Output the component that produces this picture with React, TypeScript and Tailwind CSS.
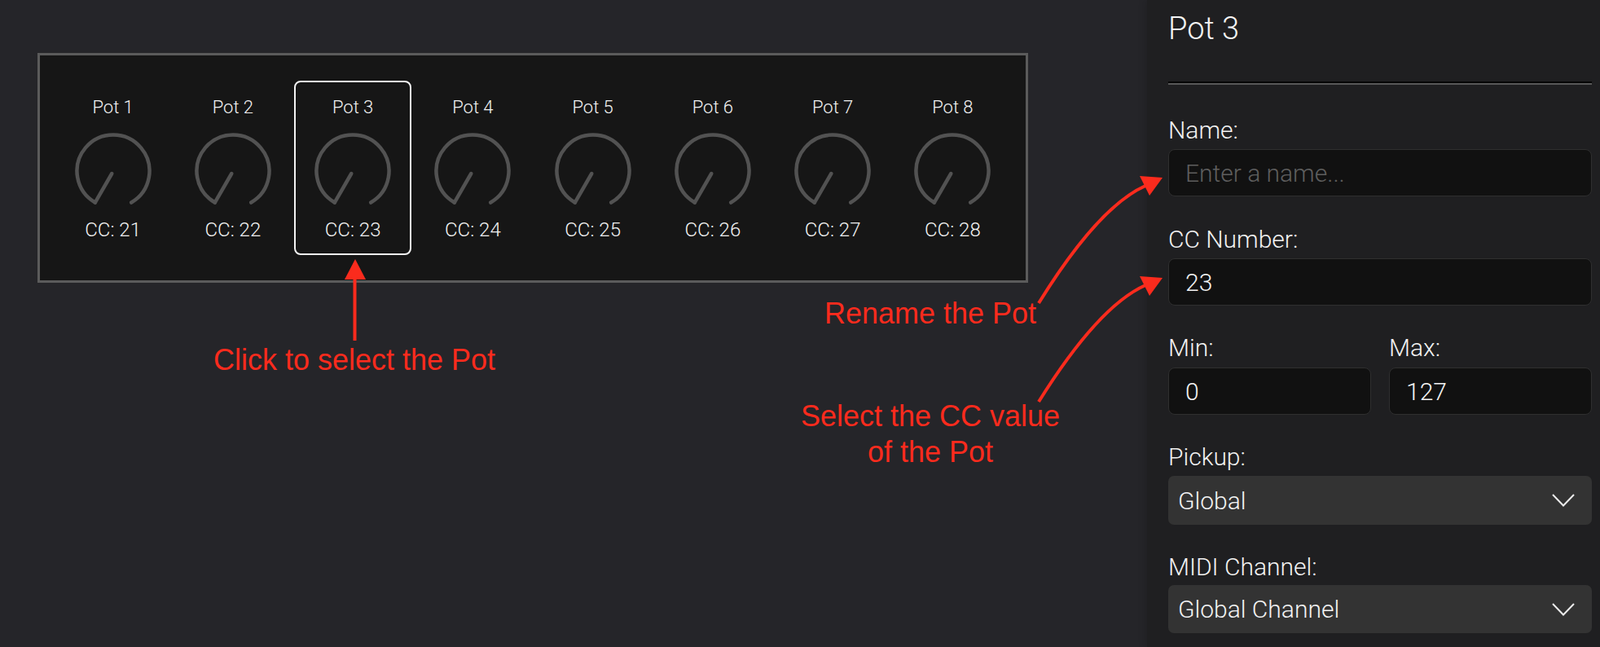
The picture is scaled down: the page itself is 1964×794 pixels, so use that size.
import React from "react";

const pots = [21, 22, 23, 24, 25, 26, 27, 28];
const selected = 3;

const Knob = () => (
  <svg width="96" height="96" viewBox="0 0 96 96" className="mt-[18px]">
    <path
      d="M 25.75 86.54 A 44.5 44.5 0 1 1 70.25 86.54"
      fill="none"
      stroke="#525252"
      strokeWidth="4.5"
      strokeLinecap="round"
    />
    <path
      d="M 46.3 51 L 25.75 86.54"
      fill="none"
      stroke="#525252"
      strokeWidth="4.5"
      strokeLinecap="round"
    />
  </svg>
);

const Chevron = () => (
  <svg width="28" height="16" viewBox="0 0 28 16">
    <polyline points="1,1 14,14.5 27,1" fill="none" stroke="#ececec" strokeWidth="2" />
  </svg>
);

const Label = ({ text, className = "" }: { text: string; className?: string }) => (
  <div className={`text-[30px] leading-[36px] font-light text-[#f2f2f2] ${className}`}>{text}</div>
);

const inputCls =
  "w-full h-[58px] bg-[#111111] border border-[#2f2f2f] rounded-[8px] px-[20px] text-[30px] font-light text-[#f2f2f2] placeholder:text-[#5e5e5e] outline-none";

const Select = ({ value, className = "" }: { value: string; className?: string }) => (
  <div
    className={`w-full bg-[#333333] rounded-[7px] pl-[12px] pr-[21px] flex items-center justify-between text-[30px] font-light text-[#f2f2f2] ${className}`}
  >
    <span>{value}</span>
    <Chevron />
  </div>
);

export default function App() {
  return (
    <div className="relative flex w-[1964px] h-[794px] overflow-hidden bg-[#252529] font-['Roboto',sans-serif]">
      {/* canvas */}
      <div className="flex-1 pt-[65px] pl-[46px]">
        <div className="w-[1216px] h-[282px] border-[3px] border-[#5b5b5b] bg-[#161616] px-[16px] flex items-center">
          {pots.map((cc, i) => {
            const isSel = i + 1 === selected;
            return (
              <div key={cc} className="flex-1 flex justify-center">
                <div
                  className={`w-[144px] h-[214px] rounded-[8px] border-2 flex flex-col items-center pt-[19px] ${
                    isSel ? "border-[#f4f4f4]" : "border-transparent"
                  }`}
                >
                  <div className="text-[22px] leading-[24px] font-light text-[#f2f2f2]">Pot {i + 1}</div>
                  <Knob />
                  <div className="mt-[12px] text-[24px] leading-[24px] font-light text-[#f2f2f2]">CC: {cc}</div>
                </div>
              </div>
            );
          })}
        </div>
      </div>

      {/* side panel */}
      <div className="w-[556px] h-full bg-[#1f1f21] pl-[26px] pr-[10px] pt-[13px] shadow-[-3px_0_8px_rgba(0,0,0,0.12)]">
        <div className="text-[38px] leading-[44px] font-light text-[#f4f4f4]">Pot 3</div>
        <div className="mt-[43px] border-t-2 border-b-2 border-t-[#050505] border-b-[#585858]" />

        <Label text="Name:" className="mt-[38px]" />
        <input className={`mt-[5px] ${inputCls}`} placeholder="Enter a name..." />

        <Label text="CC Number:" className="mt-[35px]" />
        <input className={`mt-[5px] ${inputCls}`} defaultValue="23" />

        <div className="mt-[34px] grid grid-cols-2 gap-x-[22px]">
          <div>
            <Label text="Min:" />
            <input className={`mt-[6px] ${inputCls}`} defaultValue="0" />
          </div>
          <div>
            <Label text="Max:" />
            <input className={`mt-[6px] ${inputCls}`} defaultValue="127" />
          </div>
        </div>

        <Label text="Pickup:" className="mt-[34px]" />
        <Select value="Global" className="mt-[5px] h-[60px]" />

        <Label text="MIDI Channel:" className="mt-[34px]" />
        <Select value="Global Channel" className="mt-[4px] h-[59px]" />
      </div>

      {/* annotations */}
      <svg
        className="absolute left-0 top-0 pointer-events-none"
        width="1964"
        height="794"
        viewBox="0 0 1964 794"
      >
        <line x1="435.5" y1="418" x2="435.5" y2="340" stroke="#fb2b1d" strokeWidth="4" />
        <polygon points="436,318 423,343 449,343" fill="#fb2b1d" />

        <path d="M 1275 372 Q 1348 254 1406 228" fill="none" stroke="#fb2b1d" strokeWidth="4" />
        <polygon points="1427,218 1399,216 1411,240" fill="#fb2b1d" />

        <path d="M 1275 493 Q 1348 376 1406 350" fill="none" stroke="#fb2b1d" strokeWidth="4" />
        <polygon points="1427,341 1399,339 1411,363" fill="#fb2b1d" />
      </svg>

      <div className="absolute left-[185px] top-[424px] w-[500px] text-center text-[36px] leading-[36px] text-[#fb2b1d] font-['Liberation_Sans',Arial,sans-serif] pointer-events-none">
        Click to select the Pot
      </div>
      <div className="absolute left-[892px] top-[367px] w-[500px] text-center text-[36px] leading-[36px] text-[#fb2b1d] font-['Liberation_Sans',Arial,sans-serif] pointer-events-none">
        Rename the Pot
      </div>
      <div className="absolute left-[892px] top-[489px] w-[500px] text-center text-[36px] leading-[44px] text-[#fb2b1d] font-['Liberation_Sans',Arial,sans-serif] pointer-events-none">
        Select the CC value
        <br />
        of the Pot
      </div>
    </div>
  );
}
